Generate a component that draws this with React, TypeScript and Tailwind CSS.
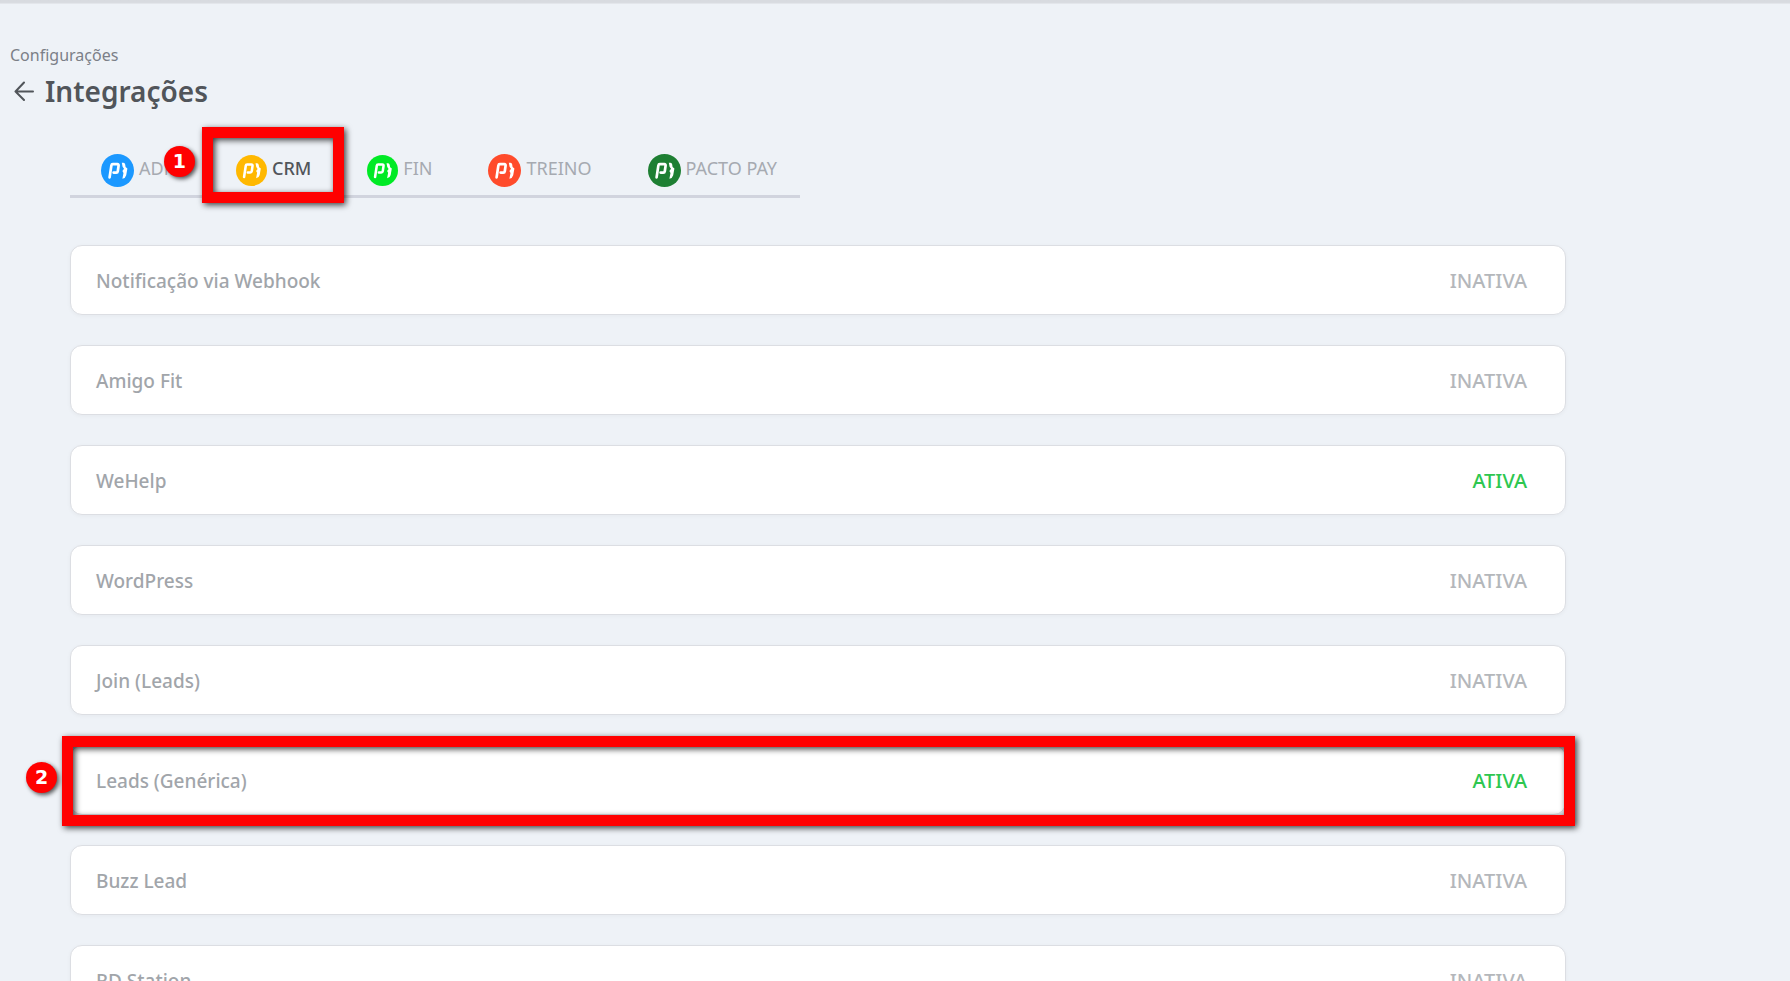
import React, { useState } from 'react';
import clsx from 'clsx';

interface Tab {
  id: string;
  label: string;
  color: string;
  large?: boolean;
  step?: number;
}

interface Integration {
  name: string;
  active: boolean;
  step?: number;
}

const tabs: Tab[] = [
  { id: 'adm', label: 'ADM', color: '#1b98ff', large: true },
  { id: 'crm', label: 'CRM', color: '#ffb800', step: 1 },
  { id: 'fin', label: 'FIN', color: '#00ea25' },
  { id: 'treino', label: 'TREINO', color: '#ff4b2b', large: true },
  { id: 'pay', label: 'PACTO PAY', color: '#1e7f33', large: true },
];

const integrations: Integration[] = [
  { name: 'Notificação via Webhook', active: false },
  { name: 'Amigo Fit', active: false },
  { name: 'WeHelp', active: true },
  { name: 'WordPress', active: false },
  { name: 'Join (Leads)', active: false },
  { name: 'Leads (Genérica)', active: true, step: 2 },
  { name: 'Buzz Lead', active: false },
  { name: 'RD Station', active: false },
];

const PactoLogo: React.FC<{ color: string; large?: boolean }> = ({ color, large }) => (
  <svg viewBox="0 0 33 33" className={clsx('shrink-0', large ? 'size-[33px]' : 'size-[31px]')} aria-hidden="true">
    <circle cx="16.5" cy="16.5" r="16.5" fill={color} />
    <path
      d="M8.6 23.4 L10.4 11.4 Q10.6 10.2 11.8 10.2 H16.4 Q17.8 10.2 17.6 11.6 L16.8 17.2 Q16.6 18.6 15.2 18.6 H12.6"
      fill="none"
      stroke="#fff"
      strokeWidth="2.7"
      strokeLinecap="round"
      strokeLinejoin="round"
    />
    <path d="M20.8 8.8 H22.4 Q24 9 24.2 10.6 L24.6 13 L26.4 14.4 L25.2 21.2 Q24.6 24 21.4 24.8 L22.5 19 L21.4 17 L23 14.8 L21.6 12.8 Z" fill="#fff" />
  </svg>
);

// Red numbered circle that points at a highlighted area
const StepBadge: React.FC<{ step: number; className: string }> = ({ step, className }) => (
  <span
    className={clsx(
      "absolute z-20 flex size-[31px] items-center justify-center rounded-full bg-[#ff0000] font-['DejaVu_Sans',sans-serif] text-[19px] leading-none font-bold text-white shadow-[2px_2px_4px_rgba(0,0,0,0.65)]",
      className
    )}
  >
    {step}
  </span>
);

const Highlight: React.FC<{ className: string }> = ({ className }) => (
  <span
    className={clsx(
      'pointer-events-none absolute z-10 border-[11px] border-[#ff0000] drop-shadow-[2px_2px_3px_rgba(0,0,0,0.75)]',
      className
    )}
  />
);

export default function App() {
  const [activeTab, setActiveTab] = useState('crm');

  return (
    <div className="h-screen overflow-hidden bg-[#eef2f7] font-['Noto_Sans',sans-serif]">
      <div className="h-1 bg-linear-to-b from-[#d8dbe0] from-60% to-[#e8ebf0]" />

      <header className="pt-[39px] pl-[10px]">
        <p className="text-base leading-6 text-[#7b7f87]">Configurações</p>
        <div className="mt-1 flex items-center gap-[11px] pl-1">
          <a href="#configuracoes" aria-label="Voltar" className="text-[#51555a]">
            <svg viewBox="0 0 20 20" className="size-5" fill="none" stroke="currentColor" strokeWidth="2" strokeLinecap="round" strokeLinejoin="round">
              <path d="M19 10.5 H1.5 M10 1.5 L1.5 10.5 L10 19" />
            </svg>
          </a>
          <h1 className="text-[28px] leading-10 font-semibold text-[#51555a]">Integrações</h1>
        </div>
      </header>

      <main className="mr-56 ml-[70px]">
        <nav className="mt-[43px] flex max-w-[730px] gap-14 border-b-3 border-[#d1d4de] pl-[31px]">
          {tabs.map((tab) => (
            <button
              key={tab.id}
              type="button"
              onClick={() => setActiveTab(tab.id)}
              className={clsx(
                'relative flex items-center gap-[5px] pb-2 text-lg leading-6 whitespace-nowrap',
                tab.id === activeTab ? 'font-medium text-[#51555a]' : 'text-[#a6aab1]'
              )}
            >
              <PactoLogo color={tab.color} large={tab.large} />
              <span className="pb-1.5">{tab.label}</span>
              {tab.step && (
                <>
                  <Highlight className="-top-[27px] -right-[33px] -bottom-2 -left-[34px]" />
                  <StepBadge step={tab.step} className="-top-2 -left-[72px]" />
                </>
              )}
            </button>
          ))}
        </nav>

        <ul className="mt-[47px] flex flex-col gap-[30px]">
          {integrations.map((item) => (
            <li key={item.name}>
              <button
                type="button"
                className="relative flex h-[70px] w-full items-center justify-between rounded-xl border border-[#dcdee3] bg-white pt-0.5 pr-[38px] pl-[25px] shadow-[0_1px_4px_rgba(0,0,0,0.04)]"
              >
                <span className="text-[19px] leading-6 font-medium text-[#a1a5aa]">{item.name}</span>
                <span className={clsx('text-xl leading-6 font-medium', item.active ? 'text-[#2ec750]' : 'text-[#b4b7bb]')}>
                  {item.active ? 'ATIVA' : 'INATIVA'}
                </span>
                {item.step && (
                  <>
                    <Highlight className="-top-[10px] -right-[10px] -bottom-3 -left-[9px]" />
                    <StepBadge step={item.step} className="top-4 -left-[45px]" />
                  </>
                )}
              </button>
            </li>
          ))}
        </ul>
      </main>
    </div>
  );
}
